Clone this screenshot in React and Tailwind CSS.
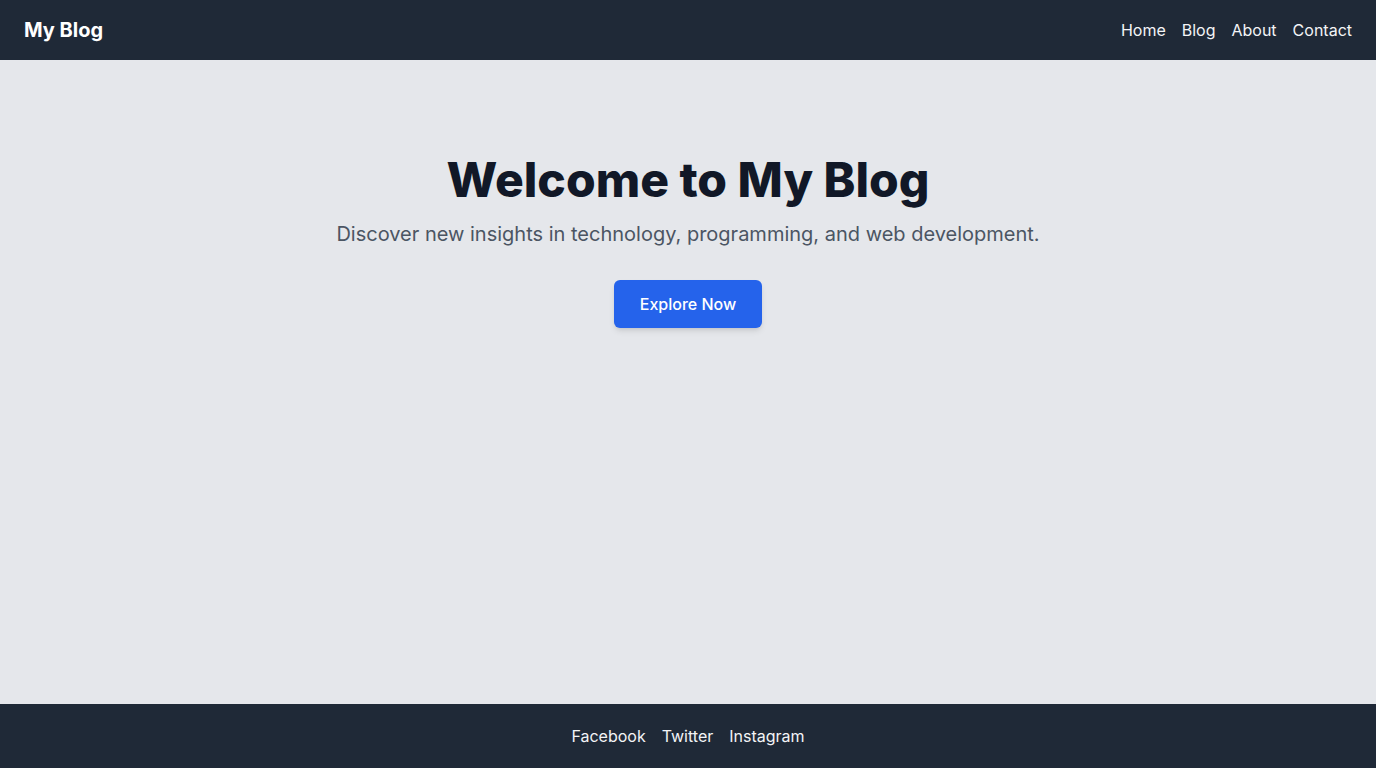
export default function App() {
  return (
    <div className="min-h-screen flex flex-col bg-[#e5e7eb]" style={{ fontFamily: "Inter, 'Noto Sans', sans-serif" }}>
      <header className="bg-[#1f2937] text-white">
        <div className="flex items-center justify-between px-6 py-4">
          <span className="text-xl font-bold">My Blog</span>
          <nav className="flex gap-4 text-[#f3f4f6]">
            <a href="#">Home</a>
            <a href="#">Blog</a>
            <a href="#">About</a>
            <a href="#">Contact</a>
          </nav>
        </div>
      </header>
      <main className="flex-grow">
        <section className="pt-24 text-center">
          <h1 className="text-5xl font-extrabold text-[#111827] mb-4">Welcome to My Blog</h1>
          <p className="text-xl text-[#4b5563] mb-8">Discover new insights in technology, programming, and web development.</p>
          <a href="#" className="inline-block bg-[#2563eb] text-white font-medium px-[26px] py-3 rounded-md shadow-md">Explore Now</a>
        </section>
      </main>
      <footer className="bg-[#1f2937] text-[#f3f4f6] py-5">
        <div className="flex justify-center gap-4">
          <a href="#">Facebook</a>
          <a href="#">Twitter</a>
          <a href="#">Instagram</a>
        </div>
      </footer>
    </div>
  );
}
